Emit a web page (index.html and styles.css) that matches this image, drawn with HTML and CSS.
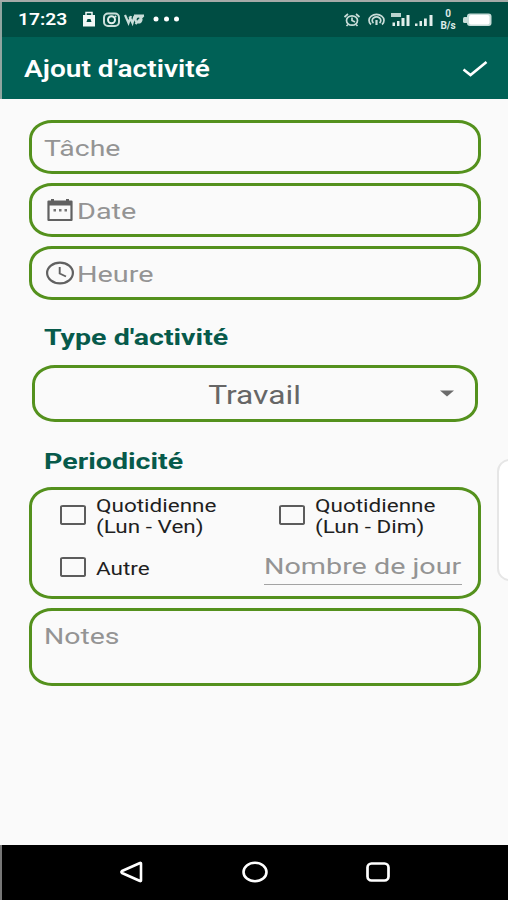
FILE: index.html
```
<!DOCTYPE html>
<html lang="fr">
<head>
    <meta charset="utf-8">
    <title>Ajout d'activité</title>
    <link rel="stylesheet" href="styles.css">
</head>
<body>
    <div class="phone">
        <div class="status">
            <span class="wide status__time">17:23</span>
            <svg class="status__left" width="102" height="20" viewBox="0 0 102 20">
                <path d="M2 5h12v11.500H2z" fill="#f2f8f6"/>
                <path d="M5 5V2.500h6V5" fill="none" stroke="#f2f8f6" stroke-width="1.500"/>
                <path d="M5.500 12l1-3h3l1 3z" fill="#004d43"/>
                <rect x="23" y="3.500" width="15" height="12.500" rx="4" fill="none" stroke="#c9ddd9" stroke-width="2"/>
                <circle cx="30.500" cy="9.700" r="3.500" fill="none" stroke="#e3efec" stroke-width="2"/>
                <circle cx="34.500" cy="6.500" r="1" fill="#e3efec"/>
                <path d="M44 5l3.500 8 2.500-7M48.500 6.500l3 6.500 2-7M53 5.500h10M54.500 9.500a3 3 0 1 0 6 0 3 3 0 1 0-6 0M54.500 14l8-8.500" fill="none" stroke="#c9ddd9" stroke-width="2.200"/>
                <circle cx="75" cy="9" r="2.500" fill="#fff"/>
                <circle cx="85.500" cy="9" r="2.500" fill="#fff"/>
                <circle cx="95.500" cy="9" r="2.500" fill="#fff"/>
            </svg>
            <svg class="status__right" width="92" height="22" viewBox="0 0 92 22">
                <g fill="none" stroke="#c9ddd9" stroke-width="1.700">
                    <ellipse cx="8" cy="11.500" rx="5.500" ry="4.700"/>
                    <path d="M8 8.500v3l3 1.500M.5 8L4 5M15.500 8L12 5M4 15.500L2.500 17M12 15.500l1.500 1.500"/>
                    <path d="M27 15.500a7.500 6 0 1 1 11 0M29.500 14a4.300 3.500 0 1 1 6 0"/>
                    <path d="M32.500 11v5" stroke-width="2.200"/>
                </g>
                <path d="M47 4h10v4H47z" fill="#b9d3ce"/>
                <g fill="#e3efec">
                    <path d="M48.500 13.500h2.500V17h-2.500zM53 12h2.500v5H53zM57.500 9H60.500v8h-3zM62.500 6h3v11h-3z"/>
                    <path d="M71 14.500h2.500V17H71zM75.500 12h2.500v5h-2.500zM80 9.500h2.800V17H80zM85.500 6h3v11h-3z"/>
                </g>
            </svg>
            <span class="status__net"><b>0</b><b>B/s</b></span>
            <svg class="status__battery" width="29" height="14" viewBox="0 0 29 14">
                <rect x="4" y=".5" width="24.500" height="12.500" rx="3" fill="#c9ddd9"/>
                <rect x="6" y="2" width="20.500" height="9.500" rx="2" fill="#fff"/>
                <rect x="0" y="4" width="5" height="6" rx="1.500" fill="#c9ddd9"/>
            </svg>
        </div>

        <header class="appbar">
            <h1 class="wide appbar__title">Ajout d'activité</h1>
            <svg width="26" height="18" viewBox="0 0 26 18">
                <path d="M1.500 9.500L8.500 15 24.500 2" fill="none" stroke="#fff" stroke-width="2.600"/>
            </svg>
        </header>

        <main class="form">
            <div class="field">
                <span class="wide hint">Tâche</span>
            </div>
            <div class="field field--icon">
                <svg width="28" height="24" viewBox="0 0 28 24">
                    <path d="M2.500 3.500h23v18.500h-23z" fill="none" stroke="#616161" stroke-width="2.200" stroke-linejoin="round"/>
                    <path d="M2 3h24v4.500H2zM5 1h3v3.500H5zM20 1h3v3.500h-3z" fill="#616161"/>
                    <path d="M7.500 11h2.500v2.500H7.500zM13 11h2.500v2.500H13zM18.500 11H21v2.500h-2.500z" fill="#757575"/>
                </svg>
                <span class="wide hint">Date</span>
            </div>
            <div class="field field--icon">
                <svg width="28" height="24" viewBox="0 0 28 24">
                    <ellipse cx="14" cy="12" rx="12.900" ry="10.300" fill="none" stroke="#616161" stroke-width="2.200"/>
                    <path d="M13.700 6v6.500l6.300 3" fill="none" stroke="#616161" stroke-width="1.900"/>
                </svg>
                <span class="wide hint">Heure</span>
            </div>

            <h2 class="wide heading heading--type">Type d'activité</h2>
            <div class="field select">
                <span class="wide select__value">Travail</span>
                <svg class="select__arrow" width="14" height="7" viewBox="0 0 14 7">
                    <path d="M0 .5h14L7 6.500z" fill="#6b6b6b"/>
                </svg>
            </div>

            <h2 class="wide heading heading--period">Periodicité</h2>
            <div class="field period">
                <div class="check">
                    <i class="check__box"></i>
                    <span class="wide check__label">Quotidienne<br>(Lun - Ven)</span>
                </div>
                <div class="check check--right">
                    <i class="check__box"></i>
                    <span class="wide check__label">Quotidienne<br>(Lun - Dim)</span>
                </div>
                <div class="check">
                    <i class="check__box"></i>
                    <span class="wide check__label">Autre</span>
                </div>
                <div class="days"><span class="wide hint hint--days">Nombre de jour</span></div>
            </div>

            <div class="field field--notes">
                <span class="wide hint">Notes</span>
            </div>
        </main>

        <div class="edge"></div>

        <nav class="navbar">
            <svg width="26" height="24" viewBox="0 0 26 24">
                <path d="M22 3.500v17q0 1-1.500.3L3 13q-1.200-1 0-2L20.500 3.200q1.500-.7 1.500.3z" fill="none" stroke="#fff" stroke-width="2.600" stroke-linejoin="round"/>
            </svg>
            <svg width="26" height="24" viewBox="0 0 26 24">
                <ellipse cx="13" cy="12" rx="11.500" ry="9.300" fill="none" stroke="#fff" stroke-width="2.600"/>
            </svg>
            <svg width="26" height="24" viewBox="0 0 26 24">
                <rect x="2.500" y="3.500" width="21" height="17" rx="4" fill="none" stroke="#fff" stroke-width="2.700"/>
            </svg>
        </nav>
    </div>
</body>
</html>
```
FILE: styles.css
```
*, ::after, ::before {
    box-sizing: border-box;
}

body {
    margin: 0;
    font-family: Roboto, "Liberation Sans", sans-serif;
    background: #fafafa;
}

h1, h2 {
    margin: 0;
}

svg {
    display: block;
    flex: none;
}

.phone {
    position: relative;
    display: flex;
    flex-direction: column;
    width: 508px;
    height: 900px;
    border-top: 2px solid #a5aaa8;
    overflow: hidden;
}

/* the interface type is wider than regular Roboto */
.wide {
    display: block;
    white-space: nowrap;
    transform: scaleX(1.29);
    transform-origin: left center;
}

.status {
    display: flex;
    align-items: center;
    height: 35px;
    padding-left: 16px;
    background: #004d43;
    border-left: 2px solid #8fa5a0;
    color: #fff;
}

.status__time {
    width: 63px;
    font-size: 16px;
    font-weight: 600;
    transform: scaleX(1.2);
}

.status__right {
    margin-left: auto;
}

.status__net {
    display: flex;
    flex-direction: column;
    align-items: center;
    width: 24px;
    font-size: 10px;
    line-height: 12px;
    color: #dcebe8;
}

.status__battery {
    margin: 0 16px 0 3px;
}

.appbar {
    display: flex;
    align-items: center;
    justify-content: space-between;
    height: 62px;
    padding: 2px 20px 0 22px;
    background: #006156;
    border-left: 2px solid #8fa5a0;
    color: #fff;
}

.appbar__title {
    padding-top: 1px;
    font-size: 23px;
    font-weight: 600;
    transform: scaleX(1.22);
}

.form {
    display: flex;
    flex: 1;
    flex-direction: column;
    padding: 21px 27px 0 29px;
}

.field {
    display: flex;
    align-items: center;
    height: 54px;
    margin-bottom: 9px;
    padding: 0 12px;
    border: 3px solid #54911d;
    border-radius: 23px / 19px;
}

.field--icon {
    padding-left: 14px;
    gap: 3px;
}

.hint {
    padding-top: 2px;
    font-size: 22px;
    color: #949494;
}

.field--icon .hint {
    transform: scaleX(1.31);
}

.heading {
    padding-left: 15px;
    transform: scaleX(1.3);
    transform-origin: 15px center;
    font-size: 22px;
    font-weight: 700;
    line-height: 26px;
    color: #075a4b;
}

.heading--type {
    margin: 16px 0 14px;
}

.heading--period {
    margin: 18px 0 12px;
}

.select {
    justify-content: center;
    position: relative;
    height: 57px;
    margin: 0 3px 9px;
}

.select__value {
    padding-top: 3px;
    font-size: 25px;
    color: #666;
    transform: scaleX(1.27);
    transform-origin: center;
}

.select__arrow {
    position: absolute;
    right: 21px;
}

.period {
    display: grid;
    grid-template-columns: 204px 1fr;
    grid-template-rows: 50px 54px;
    align-content: start;
    height: 112px;
    padding: 0 16px 0 28px;
}

.check {
    display: flex;
    align-items: center;
    gap: 10px;
}

.check--right {
    padding-left: 15px;
}

.check__box {
    width: 26px;
    height: 20px;
    border: 2px solid #5c5c5c;
    border-radius: 3px / 2px;
}

.check__label {
    padding-top: 2px;
    font-size: 18px;
    line-height: 21px;
    color: #1f1f1f;
    transform: scaleX(1.25);
}

.days {
    height: 44px;
    width: 198px;
    padding-top: 12px;
    border-bottom: 1px solid #a3a3a3;
    line-height: 24px;
    margin-top: -8px;
}

.hint--days {
    transform: scaleX(1.305);
}

.field--notes {
    align-items: flex-start;
    height: 78px;
    padding-top: 11px;
}

/* handle of the side panel, half outside the screen */
.edge {
    position: absolute;
    top: 457px;
    right: -14px;
    width: 25px;
    height: 122px;
    background: #fff;
    border: 2px solid #e6e6e6;
    border-radius: 14px;
}

.navbar {
    display: flex;
    align-items: center;
    justify-content: space-between;
    height: 55px;
    padding: 0 117px 2px 117px;
    background: #000;
    border-left: 2px solid #777;
}
```
